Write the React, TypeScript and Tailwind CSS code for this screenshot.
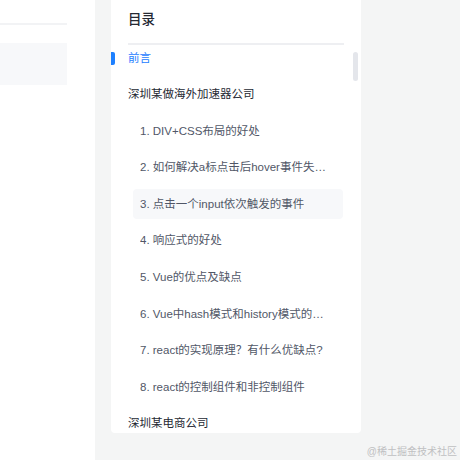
import React from "react";

const font = { fontFamily: '"Liberation Sans", "Noto Sans CJK SC", sans-serif' };

type Item = { text: string; level: 1 | 2; active?: boolean; hover?: boolean };

const items: Item[] = [
  { text: "前言", level: 1, active: true },
  { text: "深圳某做海外加速器公司", level: 1 },
  { text: "1. DIV+CSS布局的好处", level: 2 },
  { text: "2. 如何解决a标点击后hover事件失效的问题", level: 2 },
  { text: "3. 点击一个input依次触发的事件", level: 2, hover: true },
  { text: "4. 响应式的好处", level: 2 },
  { text: "5. Vue的优点及缺点", level: 2 },
  { text: "6. Vue中hash模式和history模式的区别", level: 2 },
  { text: "7. react的实现原理？有什么优缺点?", level: 2 },
  { text: "8. react的控制组件和非控制组件", level: 2 },
  { text: "深圳某电商公司", level: 1 },
];

export default function App() {
  return (
    <div
      className="relative flex h-[460px] w-[460px] overflow-hidden bg-[#f4f5f5]"
      style={font}
    >
      <div className="flex h-full w-[95px] shrink-0 flex-col bg-white">
        <div className="mt-[23px] h-[2px] w-[67px] bg-[#f2f3f5]" />
        <div className="mt-[18px] h-[42px] w-[67px] bg-[#f7f8fa]" />
      </div>
      <div className="ml-[16px] h-[433px] w-[250px] shrink-0 overflow-hidden rounded-b-[4px] bg-white">
        <div className="relative h-full">
          <div className="px-[17px]">
            <div className="flex h-[40px] items-center text-[13.5px] font-medium leading-[20px] text-[#252933]">
              目录
            </div>
            <div className="mt-[3px] h-[1.5px] bg-[#eeeff2]" />
          </div>
          <div className="absolute left-[242px] top-[52px] h-[29px] w-[5px] rounded-full bg-[#e4e6eb]" />
          <div className="absolute left-0 top-[52px] h-[13px] w-[3.5px] rounded-r-[2px] bg-[#1e80ff]" />
          <div className="mt-[-2px] flex flex-col gap-[6.6px] pl-[17px] pr-[18px]">
            {items.map((it, i) =>
              it.level === 1 ? (
                <div
                  key={i}
                  className={`flex h-[30px] items-center text-[11.5px] leading-[18px] ${
                    it.active ? "text-[#1e80ff]" : "text-[#252933]"
                  }`}
                >
                  <span className="truncate">{it.text}</span>
                </div>
              ) : (
                <div
                  key={i}
                  className={`ml-[5px] flex h-[30px] items-center rounded-[4px] pl-[7px] pr-[12px] text-[11.5px] leading-[18px] text-[#515767] ${
                    it.hover ? "bg-[#f7f8fa]" : ""
                  }`}
                >
                  <span className="truncate">{it.text}</span>
                </div>
              )
            )}
          </div>
        </div>
      </div>
      <div className="absolute bottom-[1px] right-[3px] text-[10px] leading-[14px] text-[#bfc0c2]">
        @稀土掘金技术社区
      </div>
    </div>
  );
}
